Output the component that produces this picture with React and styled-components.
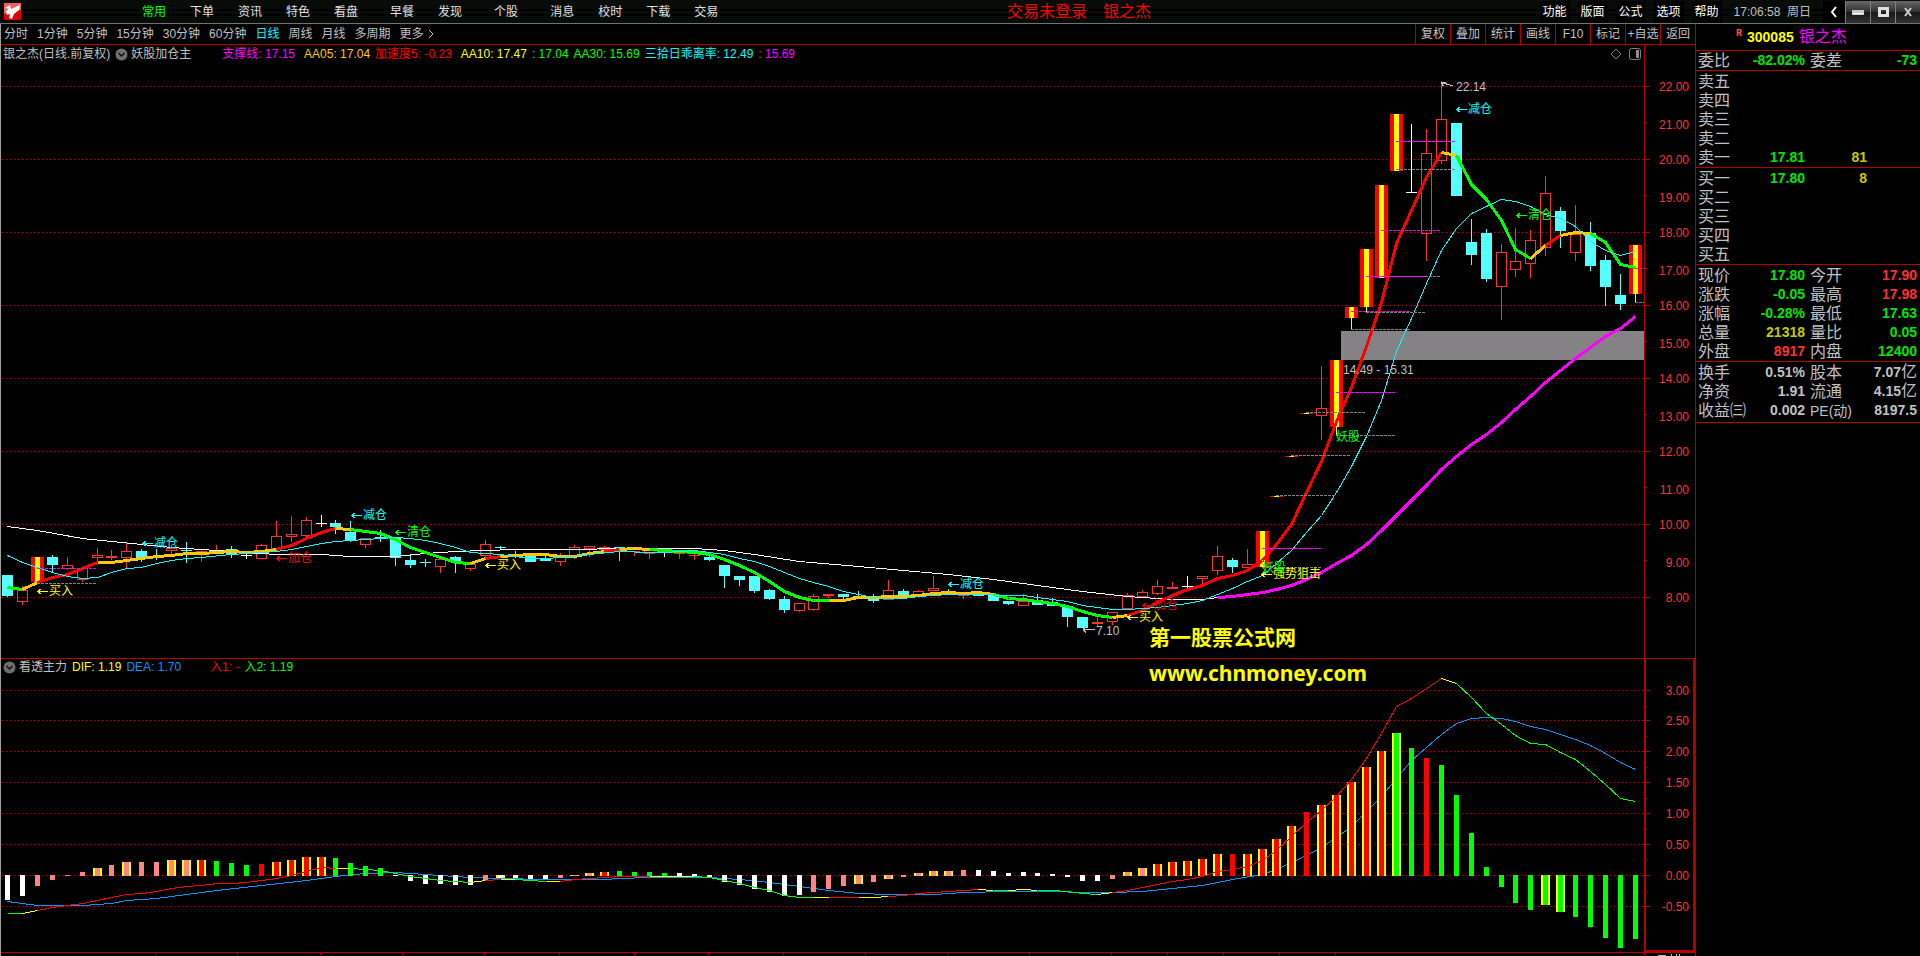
import styled, { createGlobalStyle } from 'styled-components';

const GlobalStyle = createGlobalStyle`
  * {
    box-sizing: border-box;
  }

  body {
    margin: 0;
    background: #000;
    color: #c0c0c0;
    font-family: 'Liberation Sans', 'Noto Sans CJK SC', sans-serif;
    font-size: 12px;
  }

  button {
    padding: 0;
    border: 0;
    background: none;
    color: inherit;
    font: inherit;
    white-space: nowrap;
    cursor: pointer;
  }
`;

const RED = '#b00000';
const UP = '#ff3232';
const DOWN = '#54ffff';
const GREEN = '#00e600';
const GOLD = '#c8c800';
const AMBER = '#ffc800';

const Page = styled.div`
  display: flex;
  flex-direction: column;
  min-height: 100vh;
`;

const TopBar = styled.header`
  display: grid;
  grid-template-columns: auto 1fr auto;
  align-items: center;
  height: 24px;
  border-bottom: 1px solid #707470;
  background: linear-gradient(#080c08 0 9px, #000 9px 11px, #080c08 11px 14px, #000 14px 16px, #080c08 16px);
`;

const MenuBar = styled.nav`
  display: flex;
  align-items: center;
  gap: 24px;
  padding-left: 4px;
`;

const LogoLink = styled.a`
  display: flex;
  margin-right: 97px;
`;

const MenuItem = styled.button`
  height: 22px;
  margin-left: ${props => (props.$wide ? '8px' : '0')};
  color: ${props => (props.$active ? '#00ff00' : '#e0e0e0')};
  line-height: 22px;
`;

const PageTitle = styled.h1`
  display: flex;
  justify-content: center;
  gap: 16px;
  margin: 0;
  padding-right: 100px;
  color: #f00;
  font-size: 16px;
  font-weight: 400;
  line-height: 22px;
  white-space: nowrap;
`;

const TopRight = styled.div`
  display: flex;
  justify-content: flex-end;
  align-items: center;
`;

const SystemItem = styled.button`
  width: 30px;
  height: 22px;
  margin-right: 8px;
  background: #000;
  color: #fff;
  line-height: 22px;
`;

const Clock = styled.time`
  padding: 0 12px 0 4px;
  line-height: 22px;
`;

const BackButton = styled.button`
  display: flex;
  justify-content: center;
  align-items: center;
  width: 22px;
  height: 22px;
  background: #000;
`;

const WindowButton = styled.button`
  display: flex;
  justify-content: center;
  align-items: center;
  width: 25px;
  height: 22px;
  border-left: 1px solid #808080;
  background: linear-gradient(#686868, #303030 50%, #181818 51%, #303030);
`;

const Body = styled.main`
  display: grid;
  grid-template-columns: 1fr 225px;
  flex: 1;
`;

const Workspace = styled.div`
  display: flex;
  flex-direction: column;
  min-width: 0;
  border-left: 1px solid #a0a0a0;
`;

const Toolbar = styled.div`
  display: flex;
  justify-content: space-between;
  height: 21px;
  border-bottom: 1px solid ${RED};
`;

const Periods = styled.nav`
  display: flex;
  align-items: center;
  gap: 9px;
  padding-left: 3px;
`;

const Period = styled.button`
  display: flex;
  align-items: center;
  gap: 4px;
  color: ${props => (props.$active ? '#00ffff' : '#c0c0c0')};
  line-height: 20px;
`;

const Tools = styled.div`
  display: flex;
`;

const Tool = styled.button`
  width: 35px;
  border-left: 1px solid ${RED};
  line-height: 20px;
`;

const Panel = styled.section`
  position: relative;
  border-bottom: 1px solid ${RED};

  > svg {
    display: block;
    width: 100%;
    height: auto;
  }
`;

const Legend = styled.div`
  position: absolute;
  top: ${props => props.$top || 0}px;
  left: 0;
  display: flex;
  align-items: center;
  gap: 5px;
  padding-left: 2px;
  line-height: 17px;
  white-space: nowrap;
`;

const LegendName = styled.span`
  margin-right: ${props => props.$after || 0}px;
`;

const LegendValue = styled.span`
  margin-left: ${props => props.$before || 0}px;
  color: ${props => props.$color};
`;

const RoundButton = styled.button`
  display: flex;
  margin-right: -2px;
`;

const PanelTools = styled.div`
  position: absolute;
  top: 3px;
  right: 54px;
  display: flex;
  gap: 7px;
`;

const TimeAxis = styled.footer`
  height: 3px;
  overflow: hidden;

  > svg {
    display: block;
    width: 100%;
    height: 3px;
  }
`;

const Quote = styled.aside`
  border-left: 1px solid ${RED};
`;

const QuoteTitle = styled.h2`
  display: flex;
  align-items: center;
  height: 27px;
  margin: 0;
  padding-left: 40px;
  border-bottom: 1px solid ${RED};
  color: #ff00ff;
  font-size: 16px;
  font-weight: 400;
  line-height: 26px;
`;

const Flag = styled.sup`
  margin: 0 5px 6px 0;
  color: #ff5050;
  font: bold 10px/12px 'Liberation Mono', monospace;
`;

const Code = styled.span`
  margin-right: 5px;
  color: #ff0;
  font-size: 14px;
  font-weight: 700;
`;

const QuoteTable = styled.table`
  width: 100%;
  border-collapse: separate;
  border-spacing: 0;
  table-layout: fixed;
  padding-top: ${props => props.$top || 0}px;
  padding-bottom: ${props => props.$bottom || 0}px;
  border-bottom: 1px solid ${RED};

  th,
  td {
    height: 19px;
    padding: 0;
    line-height: 19px;
    white-space: nowrap;
  }

  th {
    padding-left: 2px;
    font-size: 16px;
    font-weight: 400;
    text-align: left;
  }

  th + td + th {
    padding-left: 4px;
  }
`;

const Col = styled.col`
  width: ${props => props.$w}px;
`;

const Value = styled.td`
  && {
    padding-right: ${props => (props.$last ? 3 : 1)}px;
  }
  color: ${props => props.$color};
  font-size: 14px;
  font-weight: 700;
  text-align: right;
`;

const Unit = styled.span`
  font-size: 16px;
  font-weight: 400;
  line-height: 1;
`;

const SmallLabel = styled.span`
  font-size: 14px;
  line-height: 1;
`;

const MENU = [
  ['常用'], ['下单'], ['资讯'], ['特色'], ['看盘'], ['早餐', true],
  ['发现'], ['个股', true], ['消息', true], ['校时'], ['下载'], ['交易']
];
const SYSTEM = ['功能', '版面', '公式', '选项', '帮助'];
const PERIODS = ['分时', '1分钟', '5分钟', '15分钟', '30分钟', '60分钟', '日线', '周线', '月线', '多周期', '更多'];
const TOOLS = ['复权', '叠加', '统计', '画线', 'F10', '标记', '+自选', '返回'];

const SELL = [['卖五'], ['卖四'], ['卖三'], ['卖二'], ['卖一', '17.81', '81']];
const BUY = [['买一', '17.80', '8'], ['买二'], ['买三'], ['买四'], ['买五']];
const PRICES = [
  ['现价', '17.80', GREEN, '今开', '17.90', UP],
  ['涨跌', '-0.05', GREEN, '最高', '17.98', UP],
  ['涨幅', '-0.28%', GREEN, '最低', '17.63', GREEN],
  ['总量', '21318', GOLD, '量比', '0.05', GREEN],
  ['外盘', '8917', UP, '内盘', '12400', GREEN]
];
const BASICS = [
  ['换手', '0.51%', '#c0c0c0', '股本', '7.07', '#c0c0c0', '亿'],
  ['净资', '1.91', '#c0c0c0', '流通', '4.15', '#c0c0c0', '亿'],
  ['收益㈢', '0.002', '#c0c0c0', 'PE(动)', '8197.5', '#c0c0c0']
];

// kind, high, body top, body bottom, low
// r hollow up, R solid up, c down, w flat, y limit up
const CANDLES = [
  ['c', 575, 575, 596, 597], ['r', 586, 590, 602, 605], ['y', 557, 557, 582, 582], ['c', 555, 557, 565, 572],
  ['r', 557, 565, 569, 570], ['r', 568, 568, 580, 582], ['r', 548, 555, 558, 561], ['R', 550, 556, 558, 560],
  ['r', 543, 551, 558, 568], ['c', 549, 551, 558, 562], ['c', 549, 556, 557, 560], ['r', 545, 548, 551, 557],
  ['c', 542, 550, 551, 563], ['R', 549, 551, 552, 562], ['R', 545, 550, 551, 554], ['c', 546, 549, 554, 558],
  ['w', 553, 555, 556, 559], ['r', 544, 545, 559, 559], ['r', 521, 536, 549, 551], ['r', 516, 534, 537, 542],
  ['r', 517, 520, 536, 537], ['w', 515, 523, 524, 527], ['c', 520, 523, 527, 534], ['c', 521, 532, 541, 542],
  ['r', 538, 538, 545, 548], ['c', 530, 537, 538, 542], ['c', 537, 537, 558, 566], ['c', 555, 560, 565, 568],
  ['c', 559, 562, 563, 567], ['r', 559, 559, 567, 573], ['c', 556, 557, 561, 573], ['r', 564, 564, 569, 571],
  ['r', 540, 544, 556, 558], ['c', 546, 547, 548, 550], ['c', 551, 556, 557, 558], ['c', 556, 556, 562, 562],
  ['c', 556, 559, 561, 561], ['r', 553, 557, 562, 566], ['r', 545, 547, 557, 559], ['r', 546, 546, 549, 557],
  ['r', 546, 547, 550, 550], ['c', 547, 547, 549, 561], ['R', 551, 551, 552, 556], ['r', 550, 550, 554, 559],
  ['w', 550, 550, 551, 557], ['r', 551, 551, 554, 559], ['R', 551, 555, 556, 560], ['c', 555, 557, 560, 561],
  ['c', 565, 565, 576, 588], ['c', 576, 576, 580, 586], ['c', 576, 576, 591, 593], ['c', 589, 590, 599, 600],
  ['c', 596, 599, 610, 613], ['r', 603, 603, 611, 612], ['r', 594, 596, 610, 611], ['R', 594, 594, 596, 598],
  ['c', 594, 594, 597, 599], ['c', 591, 596, 597, 599], ['c', 594, 597, 601, 603], ['r', 580, 590, 600, 600],
  ['c', 589, 591, 596, 596], ['r', 590, 591, 596, 596], ['r', 576, 588, 591, 591], ['c', 589, 592, 593, 594],
  ['R', 595, 595, 596, 599], ['c', 594, 595, 596, 596], ['c', 595, 595, 601, 601], ['c', 601, 601, 604, 605],
  ['r', 594, 601, 606, 606], ['c', 594, 600, 605, 605], ['c', 598, 602, 606, 606], ['c', 605, 606, 617, 627],
  ['c', 617, 617, 628, 628], ['R', 617, 622, 624, 627], ['r', 612, 612, 622, 625], ['r', 593, 595, 609, 609],
  ['r', 590, 592, 597, 598], ['r', 580, 586, 594, 595], ['R', 582, 587, 589, 589], ['w', 576, 586, 587, 588],
  ['r', 576, 576, 579, 584], ['r', 546, 556, 571, 575], ['c', 558, 560, 567, 573], ['r', 549, 564, 568, 568],
  ['y', 531, 531, 567, 567], ['y', 496, 496, 497, 497], ['y', 456, 456, 457, 457], ['y', 413, 413, 414, 414],
  ['r', 366, 408, 416, 440], ['y', 360, 360, 427, 436], ['y', 307, 307, 318, 329], ['y', 249, 249, 307, 312],
  ['y', 185, 185, 278, 278], ['y', 114, 114, 171, 171], ['w', 124, 192, 193, 193], ['r', 129, 153, 234, 261],
  ['r', 81, 119, 161, 164], ['c', 123, 123, 196, 196], ['c', 219, 242, 255, 265], ['c', 229, 233, 279, 282],
  ['r', 244, 252, 287, 320], ['r', 228, 261, 270, 277], ['r', 230, 240, 264, 278], ['r', 176, 193, 248, 256],
  ['c', 207, 211, 231, 248], ['r', 205, 234, 253, 261], ['c', 222, 233, 266, 271], ['c', 255, 260, 287, 306],
  ['c', 274, 295, 304, 310], ['y', 245, 245, 294, 302]
];

const AA05 = [
  587, 589, 582, 577, 574, 568, 562, 562, 560, 558, 556, 555, 553, 553, 552, 551, 552, 551, 549, 545,
  538, 532, 528, 529, 531, 533, 539, 547, 552, 557, 562, 563, 558, 556, 555, 554, 554, 556, 556, 553,
  551, 549, 548, 549, 550, 551, 552, 554, 559, 565, 572, 581, 591, 597, 600, 600, 600, 597, 597, 596,
  596, 595, 593, 592, 593, 592, 594, 598, 599, 601, 603, 606, 611, 615, 617, 615, 610, 602, 595, 589,
  585, 578, 575, 570, 560, 544, 524, 492, 461, 421, 387, 346, 302, 243, 210, 177, 152, 155, 184, 199,
  220, 249, 258, 245, 235, 232, 233, 242, 264, 267
];
const AA05_RUNS = [
  [1, '#0f0'], [2, AMBER], [6, '#f00'], [18, AMBER], [22, '#f00'], [23, AMBER], [31, '#0f0'], [32, AMBER],
  [33, '#f00'], [40, AMBER], [41, '#f00'], [43, AMBER], [55, '#0f0'], [66, AMBER], [74, '#0f0'], [75, AMBER],
  [96, '#f00'], [97, AMBER], [102, '#0f0'], [103, AMBER], [104, '#f00'], [106, AMBER], [109, '#0f0']
];

// index, y
const AA10 = [
  [0, 555], [1, 562], [2, 567], [3, 572], [4, 576], [5, 578], [6, 577], [7, 572], [8, 568], [9, 567],
  [10, 563], [11, 560], [12, 558], [13, 557], [15, 554], [17, 552], [18, 551], [19, 549], [20, 546], [21, 543],
  [22, 541], [23, 540], [24, 539], [25, 538], [26, 537], [27, 538], [28, 540], [29, 543], [30, 547], [31, 552],
  [32, 553], [33, 554], [34, 556], [35, 558], [36, 558], [37, 557], [39, 554], [41, 551], [43, 552], [44, 552],
  [46, 550], [47, 552], [48, 554], [49, 558], [50, 561], [51, 566], [52, 572], [53, 578], [54, 582], [55, 586],
  [56, 591], [57, 594], [58, 597], [59, 598], [60, 598], [61, 596], [62, 595], [63, 594], [65, 594], [67, 595],
  [68, 595], [69, 597], [70, 599], [71, 601], [72, 605], [73, 607], [74, 609], [75, 609], [76, 608], [77, 607],
  [78, 605], [79, 603], [80, 600], [81, 594], [82, 588], [83, 581], [84, 575], [85, 563], [86, 550], [87, 532],
  [88, 515], [89, 492], [90, 466], [91, 436], [92, 400], [93, 351], [94, 318], [95, 283], [96, 250], [97, 228],
  [98, 213], [99, 206], [100, 199], [101, 201], [102, 206], [103, 214], [104, 218], [105, 226], [106, 241], [107, 250],
  [108, 255], [109, 251]
];
const AA30 = [
  [0, 526], [2, 530], [5, 538], [9, 544], [11, 547], [14, 550], [16, 552], [18, 554], [21, 554], [23, 556],
  [26, 556], [28, 553], [30, 551], [32, 550], [34, 549], [39, 549], [40, 548], [46, 548], [48, 550], [50, 554],
  [53, 561], [57, 566], [60, 570], [63, 574], [66, 579], [69, 585], [72, 591], [75, 596], [78, 599], [80, 599],
  [81, 597]
];
const SUPPORT = [
  [81, 597], [82, 596], [83, 594], [84, 592], [85, 589], [86, 585], [87, 579], [88, 572], [89, 563], [90, 555],
  [91, 544], [92, 530], [93, 515], [94, 500], [95, 485], [96, 469], [97, 456], [98, 444], [99, 434], [100, 422],
  [101, 409], [102, 396], [103, 382], [104, 370], [105, 358], [106, 347], [107, 336], [108, 328], [109, 316]
];

// index the level starts at, y, colour
const LEVELS = [
  [2, 568, '#f0f'], [2, 583, '#848284'], [84, 548, '#f0f'], [84, 567, '#848284'],
  [85, 495, '#848284'], [86, 455, '#848284'], [87, 412, '#848284'], [89, 392, '#f0f'], [89, 435, '#848284'],
  [90, 311, '#f0f'], [90, 329, '#848284'], [91, 312, '#848284'], [92, 276, '#848284'], [91, 276, '#f0f'],
  [92, 230, '#f0f'], [93, 141, '#f0f'], [93, 169, '#848284'], [109, 268, '#f0f'], [109, 302, '#848284']
];

const SIGNALS = [
  ['减仓', 363, 515, '#0ff'], ['减仓', 154, 543, '#0ff'], ['减仓', 960, 584, '#0ff'], ['减仓', 1468, 109, '#0ff'],
  ['清仓', 407, 532, '#0f0'], ['清仓', 1528, 215, '#0f0'], ['加仓', 288, 558, '#f00'], ['加仓', 1154, 605, '#d00'],
  ['买入', 49, 591, '#ff0'], ['买入', 497, 565, '#ff0'], ['买入', 1139, 617, '#ff0'], ['强势狙击', 1273, 574, '#ff0']
];

const NOTES = [
  ['妖股', 1262, 568, '#0f0'], ['妖股', 1336, 437, '#0f0'],
  ['22.14', 1456, 87, '#c0c0c0'], ['7.10', 1096, 631, '#c0c0c0'], ['14.49 - 15.31', 1343, 370, '#c0c0c0']
];

// w white, p pink, r red, g green; capitals carry yellow edges
const BARS = `w-25 w-21 p-11 p-5 p1 p4 P8 p11 P14 p14 p14 P16 P16 R16 g15 g13 g11 r12 R14 R16 R19 R19
  g18 g13 g10 g8 w-1 w-6 w-9 w-9 w-10 w-10 p-5 W-3 w-3 w-4 w-4 p-3 P1 P3 R4 g5 g4 g4 g3 w3 w2 w-2
  w-7 w-10 w-14 w-17 w-21 w-20 p-17 p-14 p-11 P-9 p-7 P-4 p-2 P3 P5 P5 p6 w6 w5 w3 w4 w3 w2 w-2
  w-6 w-6 p-4 P4 P8 R12 R14 R15 R17 R22 r22 R22 R27 R37 R50 r64 R71 R81 R94 R109 R125 G143 g128 r118
  g111 g81 g43 g9 g-12 g-28 g-35 G-30 G-37 g-42 g-52 g-63 g-73 g-64`
  .split(/\s+/)
  .map(bar => [bar[0], Number(bar.slice(1))]);
const BAR_COLORS = { w: '#fff', p: '#ff8484', r: '#f00', g: '#0f0' };

const DIF = [
  913, 913, 910, 907, 905, 903, 900, 897, 894, 893, 891, 888, 886, 885, 883, 883, 882, 880, 878, 875,
  871, 867, 868, 868, 869, 870, 873, 876, 878, 880, 881, 882, 880, 879, 879, 880, 881, 881, 879, 878,
  877, 876, 876, 876, 876, 876, 876, 877, 880, 883, 887, 890, 895, 897, 897, 897, 897, 897, 897, 896,
  895, 893, 892, 891, 890, 889, 890, 890, 889, 890, 890, 891, 893, 894, 892, 890, 887, 884, 881, 879,
  876, 871, 869, 866, 860, 850, 836, 822, 810, 796, 779, 758, 733, 706, 698, 688, 678, 683, 697, 713,
  724, 735, 743, 744, 752, 759, 771, 784, 798, 801
];
const DIF_RUNS = [
  [1, '#0f0'], [2, '#ff0'], [22, '#f00'], [23, '#ff0'], [31, '#0f0'], [32, '#ff0'], [33, '#f00'], [34, '#ff0'],
  [36, '#0f0'], [37, '#ff0'], [43, '#f00'], [46, '#ff0'], [54, '#0f0'], [55, '#ff0'], [57, '#f00'], [59, '#ff0'],
  [65, '#f00'], [66, '#ff0'], [67, '#0f0'], [69, '#ff0'], [73, '#0f0'], [74, '#ff0'], [96, '#f00'], [97, '#ff0'],
  [109, '#0f0']
];
const DEA = [
  [0, 901], [1, 903], [2, 905], [5, 905], [6, 904], [7, 903], [8, 900], [10, 898], [14, 890], [17, 885],
  [20, 880], [22, 876], [24, 873], [26, 872], [28, 874], [31, 877], [33, 878], [36, 879], [40, 879], [41, 878],
  [43, 877], [47, 877], [49, 879], [51, 882], [53, 886], [55, 890], [57, 893], [59, 894], [62, 894], [64, 892],
  [67, 891], [70, 891], [72, 892], [74, 892], [76, 891], [78, 888], [80, 885], [82, 879], [84, 874], [85, 869],
  [86, 862], [87, 855], [88, 847], [89, 837], [90, 826], [91, 811], [92, 796], [93, 778], [94, 760], [95, 747],
  [96, 734], [97, 723], [98, 718], [99, 717], [100, 718], [101, 721], [102, 726], [103, 729], [104, 734], [105, 739],
  [106, 745], [107, 753], [108, 762], [109, 769]
];

const TIME_TICKS = [155, 237, 320, 402, 484, 559, 634, 708, 783, 865, 947, 1029, 1111, 1167, 1223, 1279, 1335, 1644];

const xOf = i => Math.floor(7.4 + 14.936 * i);
const toPoints = pairs => pairs.map(([i, y]) => `${xOf(i) + 0.5},${y + 0.5}`).join(' ');

function Line({ data, color, width = 1 }) {
  return <polyline points={toPoints(data)} fill='none' stroke={color} strokeWidth={width} />;
}

function RunLine({ data, runs, width }) {
  return runs.map(([end, color], n) => {
    const start = n ? runs[n - 1][0] : 0;
    const part = data.slice(start, end + 1).map((y, k) => [start + k, y]);
    return <Line key={end} data={part} color={color} width={width} />;
  });
}

function Candle({ index, candle }) {
  const [kind, high, top, bottom, low] = candle;
  const x = xOf(index);
  const color = { r: UP, R: UP, c: DOWN, w: '#fff', y: '#ff0' }[kind];

  return (
    <g fill={color}>
      <rect x={x} y={high} width='1' height={top - high} />
      <rect x={x} y={bottom} width='1' height={low - bottom} />
      {kind === 'r' && (
        <rect x={x - 4.5} y={top + 0.5} width='10' height={bottom - top - 1} fill='none' stroke={color} />
      )}
      {kind === 'y' && (
        <>
          <rect x={x - 6} y={top} width='13' height={bottom - top} fill='#f00' />
          <rect x={x - 2} y={top} width='5' height={bottom - top} />
        </>
      )}
      {'Rcw'.includes(kind) && <rect x={x - 5} y={top} width='11' height={bottom - top} />}
    </g>
  );
}

function Bar({ index, bar }) {
  const [kind, value] = bar;
  const x = xOf(index);
  const y = value > 0 ? 876 - value : 875;
  const height = Math.abs(value);

  return (
    <>
      {kind < 'a' && <rect x={x - 4} y={y} width='9' height={height} fill='#ff0' />}
      <rect x={x - 2} y={y} width='5' height={height} fill={BAR_COLORS[kind.toLowerCase()]} />
    </>
  );
}

function AxisLabel({ y, children }) {
  return (
    <text x='1689' y={y} fill={UP} fontSize='12' textAnchor='end'>
      {children}
    </text>
  );
}

function GridLine({ y }) {
  return <path d={`M2 ${y + 0.5}H1644`} stroke='#c00000' strokeDasharray='1 3' />;
}

function PriceChart() {
  const prices = Array.from({ length: 15 }, (_, n) => 22 - n);

  return (
    <svg viewBox='1 45 1694 613' role='img' aria-label='日线'>
      <g shapeRendering='crispEdges'>
        {prices.map(price => {
          const y = 86 + Math.floor((22 - price) * 36.5);
          const even = price % 2 === 0;
          return (
            <g key={price}>
              {even && <GridLine y={y} />}
              <path d={`M1645 ${y + 0.5}h${even ? 5 : 2}`} stroke={RED} />
            </g>
          );
        })}
        <path d='M1644.5 45V658' stroke={RED} />
        <rect x='1341' y='331' width='303' height='29' fill='#848284' />
        {CANDLES.map((candle, index) => (
          <Candle key={index} index={index} candle={candle} />
        ))}
        <Line data={AA30} color='#fff' />
        <RunLine data={AA05} runs={AA05_RUNS} width={3} />
        <Line data={AA10} color='#0ff' />
        <Line data={SUPPORT} color='#f0f' width={3} />
        {LEVELS.map(([index, y, color], n) => (
          <path
            key={n}
            d={`M${xOf(index)} ${y + 0.5}H${Math.min(xOf(index) + 59, 1644)}`}
            stroke={color}
            strokeDasharray='3 1'
          />
        ))}
        <path d='M1441.5 82.5L1453 86M1441.5 82.5h4M1441.5 82.5l2 4' stroke='#c0c0c0' fill='none' />
        <path d='M1083 629.5h12M1083 629.5l3 -3M1083 629.5l3 3' stroke='#c0c0c0' fill='none' />
        {SIGNALS.map(([, x, y, color], n) => (
          <path key={n} d={`M${x - 11} ${y + 0.5}h10M${x - 8.5} ${y - 2}l-2.5 2.5l2.5 2.5`} stroke={color} fill='none' />
        ))}
      </g>
      {prices.map(price => (
        <AxisLabel key={price} y={91 + Math.ceil((22 - price) * 36.5) + (price % 2 ? 1 : 0)}>
          {price.toFixed(2)}
        </AxisLabel>
      ))}
      {[...SIGNALS, ...NOTES].map(([label, x, y, color], n) => (
        <text key={n} x={x} y={y + 4} fill={color} fontSize='12'>
          {label}
        </text>
      ))}
      <text x='1149' y='645' fill='#ff0' fontSize='21' fontWeight='700'>
        第一股票公式网
      </text>
    </svg>
  );
}

function MacdChart() {
  const levels = [3, 2.5, 2, 1.5, 1, 0.5, 0, -0.5];

  return (
    <svg viewBox='1 659 1694 293' role='img' aria-label='看透主力'>
      <g shapeRendering='crispEdges'>
        {levels.map((level, n) => {
          const y = 690 + Math.floor(n * 30.9);
          return (
            <g key={level}>
              <GridLine y={y} />
              <path d={`M1645 ${y + 0.5}h5`} stroke={RED} />
              {n < 7 && <path d={`M1645 ${y + 16.5}h2`} stroke={RED} />}
            </g>
          );
        })}
        <path d='M1645 659V951H1694V659' fill='none' stroke={RED} strokeWidth='2' />
        <Line data={DEA} color='#0096ff' />
        {BARS.map((bar, index) => (
          <Bar key={index} index={index} bar={bar} />
        ))}
        <RunLine data={DIF} runs={DIF_RUNS} />
      </g>
      {levels.map((level, n) => (
        <AxisLabel key={level} y={695 + Math.floor(n * 30.9)}>
          {level.toFixed(2)}
        </AxisLabel>
      ))}
      <text x='1149' y='681' fill='#ff0' fontSize='21' fontWeight='700' fontFamily='Noto Sans, sans-serif'>
        www.chnmoney.com
      </text>
    </svg>
  );
}

function Logo() {
  return (
    <svg width='17' height='17' viewBox='0 0 17 17'>
      <rect width='17' height='17' fill='#e00000' />
      <path d='M0 0h17v7L0 11z' fill='#f06060' />
      <path d='M1 5l5-3 1 4 9-4-1 5-5 4-2 5-3-1 1-4-3 1-1-4 3-2z' fill='#fff' />
    </svg>
  );
}

function Collapse({ label }) {
  return (
    <RoundButton aria-label={label}>
      <svg width='13' height='13' viewBox='0 0 13 13' fill='none'>
        <circle cx='6.5' cy='6.5' r='6' fill='#707070' />
        <path d='M3.5 5l3 3 3-3' stroke='#101010' strokeWidth='1.5' />
      </svg>
    </RoundButton>
  );
}

function OrderBook({ rows }) {
  return (
    <QuoteTable $top={1}>
      <colgroup>
        <Col $w={50} />
        <Col $w={60} />
        <Col $w={62} />
        <col />
      </colgroup>
      <tbody>
        {rows.map(([name, price, volume]) => (
          <tr key={name}>
            <th scope='row'>{name}</th>
            <Value $color={GREEN}>{price}</Value>
            <Value $color={GOLD}>{volume}</Value>
            <td />
          </tr>
        ))}
      </tbody>
    </QuoteTable>
  );
}

function Figures({ rows, top, bottom }) {
  return (
    <QuoteTable $top={top} $bottom={bottom}>
      <colgroup>
        <Col $w={50} />
        <Col $w={60} />
        <Col $w={50} />
        <col />
      </colgroup>
      <tbody>
        {rows.map(([name, value, color, name2, value2, color2, unit]) => (
          <tr key={name}>
            <th scope='row'>{name}</th>
            <Value $color={color}>{value}</Value>
            <th scope='row'>{name2.startsWith('PE') ? <SmallLabel>{name2}</SmallLabel> : name2}</th>
            <Value $color={color2} $last>
              {value2}
              {unit && <Unit>{unit}</Unit>}
            </Value>
          </tr>
        ))}
      </tbody>
    </QuoteTable>
  );
}

function Header() {
  return (
    <TopBar>
      <MenuBar>
        <LogoLink href='#' aria-label='首页'>
          <Logo />
        </LogoLink>
        {MENU.map(([name, wide], n) => (
          <MenuItem key={name} $wide={wide} $active={n === 0}>
            {name}
          </MenuItem>
        ))}
      </MenuBar>
      <PageTitle>
        <span>交易未登录</span>
        <span>银之杰</span>
      </PageTitle>
      <TopRight>
        {SYSTEM.map(name => (
          <SystemItem key={name}>{name}</SystemItem>
        ))}
        <Clock>17:06:58&nbsp; 周日</Clock>
        <BackButton aria-label='后退'>
          <svg width='8' height='12' viewBox='0 0 8 12' fill='none'>
            <path d='M6 1L2 6l4 5' stroke='#fff' strokeWidth='2' />
          </svg>
        </BackButton>
        <WindowButton aria-label='最小化'>
          <svg width='12' height='6' viewBox='0 0 12 6'>
            <rect x='0' y='1' width='12' height='5' fill='#c8c8c8' />
            <rect x='1' y='4' width='10' height='1' fill='#fff' />
          </svg>
        </WindowButton>
        <WindowButton aria-label='最大化'>
          <svg width='11' height='10' viewBox='0 0 11 10'>
            <path d='M0 0h11v10H0zM3 3v4h5V3z' fill='#e0e0e0' fillRule='evenodd' />
          </svg>
        </WindowButton>
        <WindowButton aria-label='关闭'>
          <svg width='8' height='10' viewBox='0 0 8 10'>
            <path d='M1 1l6 8M7 1L1 9' stroke='#d0d0d0' strokeWidth='2' />
          </svg>
        </WindowButton>
      </TopRight>
    </TopBar>
  );
}

function App() {
  return (
    <Page>
      <GlobalStyle />
      <Header />
      <Body>
        <Workspace>
          <Toolbar>
            <Periods>
              {PERIODS.map(name => (
                <Period key={name} $active={name === '日线'}>
                  {name}
                  {name === '更多' && (
                    <svg width='6' height='10' viewBox='0 0 6 10' fill='none'>
                      <path d='M1 1l4 4-4 4' stroke='#c0c0c0' />
                    </svg>
                  )}
                </Period>
              ))}
            </Periods>
            <Tools>
              {TOOLS.map(name => (
                <Tool key={name}>{name}</Tool>
              ))}
            </Tools>
          </Toolbar>
          <Panel>
            <PriceChart />
            <Legend $top={1}>
              <LegendName>银之杰(日线.前复权)</LegendName>
              <Collapse label='主图指标' />
              <LegendName $after={26}>妖股加仓主</LegendName>
              <LegendValue $color='#f0f'>支撑线: 17.15</LegendValue>
              <LegendValue $color={AMBER} $before={4}>AA05: 17.04</LegendValue>
              <LegendValue $color='#f00'>加速度5: -0.23</LegendValue>
              <LegendValue $color='#ff0' $before={4}>AA10: 17.47</LegendValue>
              <LegendValue $color='#0f0'>: 17.04</LegendValue>
              <LegendValue $color='#0f0'>AA30: 15.69</LegendValue>
              <LegendValue $color='#0ff'>三拾日乖离率: 12.49</LegendValue>
              <LegendValue $color='#f0f'>: 15.69</LegendValue>
            </Legend>
            <PanelTools>
              <button aria-label='标识'>
                <svg width='12' height='12' viewBox='0 0 12 12' fill='none'>
                  <path d='M6 1l5 5-5 5-5-5z' stroke='#808080' />
                </svg>
              </button>
              <button aria-label='侧栏'>
                <svg width='12' height='12' viewBox='0 0 12 12' fill='none'>
                  <rect x='.5' y='.5' width='11' height='11' rx='2' stroke='#808080' />
                  <rect x='7' y='2' width='3' height='8' fill='#909090' />
                </svg>
              </button>
            </PanelTools>
          </Panel>
          <Panel>
            <MacdChart />
            <Legend>
              <Collapse label='副图指标' />
              <LegendName>看透主力</LegendName>
              <LegendValue $color='#ff0'>DIF: 1.19</LegendValue>
              <LegendValue $color='#0096ff'>DEA: 1.70</LegendValue>
              <LegendValue $color='#f00' $before={24}>入1: -</LegendValue>
              <LegendValue $color='#0f0'>入2: 1.19</LegendValue>
            </Legend>
          </Panel>
          <TimeAxis>
            <svg viewBox='1 953 1694 3' preserveAspectRatio='xMinYMin slice' shapeRendering='crispEdges'>
              {TIME_TICKS.map(x => (
                <path key={x} d={`M${x + 0.5} 953v2`} stroke={RED} />
              ))}
              <path d='M1658 955.5h8M1671.5 954v2M1676.5 954v2M1679.5 954v2' stroke='#c0c0c0' />
            </svg>
          </TimeAxis>
        </Workspace>
        <Quote>
          <QuoteTitle>
            <Flag>R</Flag>
            <Code>300085</Code>
            银之杰
          </QuoteTitle>
          <Figures rows={[['委比', '-82.02%', GREEN, '委差', '-73', GREEN]]} />
          <OrderBook rows={SELL} />
          <OrderBook rows={BUY} />
          <Figures rows={PRICES} top={1} />
          <Figures rows={BASICS} top={1} bottom={2} />
        </Quote>
      </Body>
    </Page>
  );
}

export default App;
